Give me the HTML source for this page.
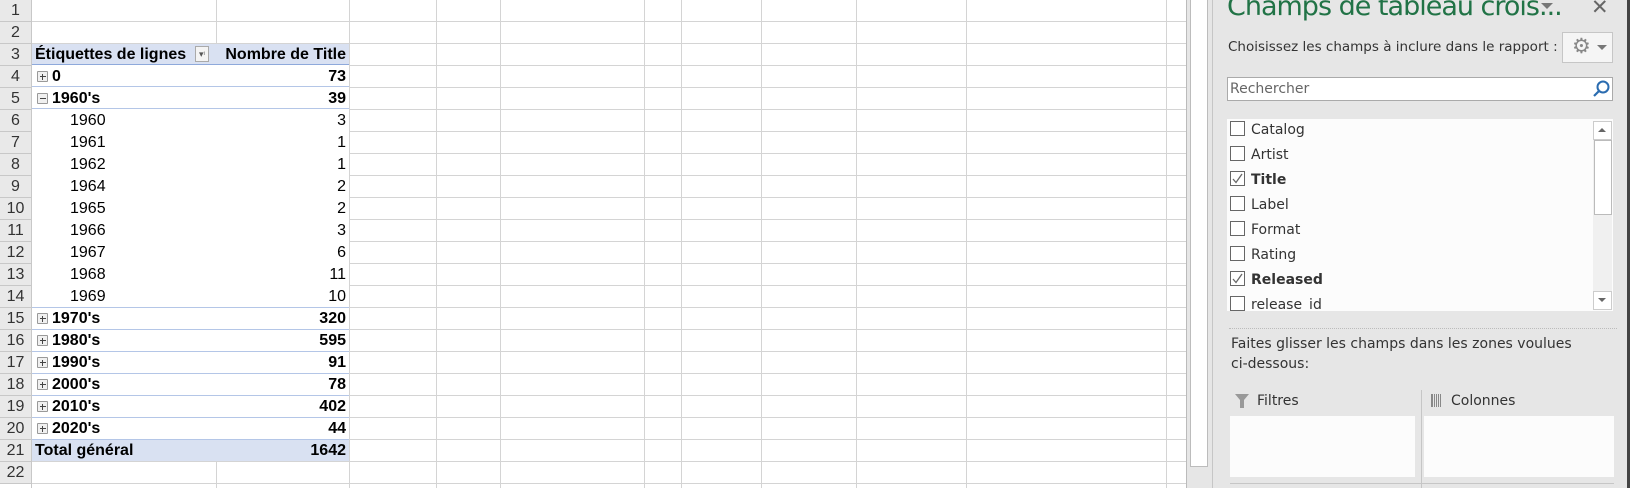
<!DOCTYPE html>
<html><head><meta charset="utf-8"><style>
*{margin:0;padding:0;box-sizing:border-box}
body{width:1630px;height:488px;overflow:hidden;background:#fff;position:relative;font-family:"Liberation Sans",sans-serif}
.a{position:absolute}
.vl{position:absolute;top:0;width:1px;height:488px;background:#d4d4d4}
.hl{position:absolute;left:0;width:1187px;height:1px;background:#d4d4d4}
.rh{position:absolute;left:0;width:31px;height:22px;background:#e9e9e9;color:#333;font-size:16px;text-align:center;line-height:22px;border-bottom:1px solid #c8c8c8}
.c{position:absolute;height:21px;line-height:22px;font-size:16px;color:#000;white-space:nowrap}
.b{font-weight:bold}
.r{text-align:right}
.pm{position:absolute;width:11px;height:11px;border:1px solid #999;background:#f0f0f0;border-radius:1px}
.pm:before{content:"";position:absolute;left:1.5px;top:4px;width:6px;height:1px;background:#444}
.pm.p:after{content:"";position:absolute;left:4px;top:1.5px;width:1px;height:6px;background:#444}
.cb{position:absolute;left:1230px;width:15px;height:15px;border:1px solid #666;background:#fff}
.it{position:absolute;left:1251px;font-size:14px;color:#333;font-family:"DejaVu Sans","Liberation Sans",sans-serif}
</style></head><body>
<div class="vl" style="left:216px"></div>
<div class="vl" style="left:349px"></div>
<div class="vl" style="left:436px"></div>
<div class="vl" style="left:500px"></div>
<div class="vl" style="left:644px"></div>
<div class="vl" style="left:681px"></div>
<div class="vl" style="left:761px"></div>
<div class="vl" style="left:856px"></div>
<div class="vl" style="left:966px"></div>
<div class="vl" style="left:1166px"></div>
<div id="hls"></div>
<script>
var h='';
for(var i=1;i<=22;i++){h+='<div class="hl" style="top:'+(22*i-1)+'px"></div>';h+='<div class="rh" style="top:'+(22*(i-1))+'px">'+i+'</div>';}
document.getElementById('hls').innerHTML=h;
</script>
<div class="a" style="left:31px;top:0;width:1px;height:488px;background:#c8c8c8"></div>
<div class="a" style="left:32px;top:65px;width:317px;height:375px;background:#fff"></div>
<div class="a" style="left:32px;top:44px;width:317px;height:21px;background:#d9e1f2"></div>
<div class="a" style="left:32px;top:64px;width:317px;height:1px;background:#8ea9db"></div>
<div class="a" style="left:32px;top:440px;width:317px;height:21px;background:#d9e1f2"></div>
<div class="a" style="left:32px;top:439px;width:317px;height:1px;background:#8ea9db"></div>
<div class="a" style="left:32px;top:108px;width:317px;height:1px;background:#b4c6e7"></div>
<div class="c b" style="left:35px;top:44px">Étiquettes de lignes</div>
<div class="a" style="left:195px;top:46px;width:14px;height:16px;border:1px solid #aaa;background:#f4f4f4;font-size:9px;color:#555;line-height:14px;text-align:center">▾ᶦ</div>
<div class="c b r" style="left:205px;top:44px;width:141px">Nombre de Title</div>
<div id="rows"></div>
<script>
var d=[['0','73',1,1],['1960\'s','39',1,0],['1960','3'],['1961','1'],['1962','1'],['1964','2'],['1965','2'],['1966','3'],['1967','6'],['1968','11'],['1969','10'],['1970\'s','320',1,1],['1980\'s','595',1,1],['1990\'s','91',1,1],['2000\'s','78',1,1],['2010\'s','402',1,1],['2020\'s','44',1,1]];
var s='';
for(var k=0;k<d.length;k++){var t=22*(k+3);var x=d[k];
 s+='<div class="a" style="left:32px;top:'+(t+21)+'px;width:317px;height:1px;background:'+(k>=10?'#b4c6e7':'#fff')+'"></div>';
 if(x.length>2){s+='<div class="pm'+(x[3]?' p':'')+'" style="left:37px;top:'+(t+5)+'px"></div><div class="c b" style="left:52px;top:'+t+'px">'+x[0]+'</div><div class="c b r" style="left:250px;width:96px;top:'+t+'px">'+x[1]+'</div>';}
 else s+='<div class="c" style="left:70px;top:'+t+'px">'+x[0]+'</div><div class="c r" style="left:250px;width:96px;top:'+t+'px">'+x[1]+'</div>';}
document.getElementById('rows').innerHTML=s;
</script>
<div class="a" style="left:32px;top:86px;width:317px;height:1px;background:#b4c6e7"></div>
<div class="c b" style="left:35px;top:440px">Total général</div>
<div class="c b r" style="left:250px;width:96px;top:440px">1642</div>
<div class="a" style="left:1186px;top:0;width:1px;height:488px;background:#bbb"></div>
<div class="a" style="left:1187px;top:0;width:25px;height:488px;background:#e6e6e6"></div>
<div class="a" style="left:1190px;top:0;width:18px;height:467px;background:#fff;border:1px solid #bcbcbc;border-top:none"></div>
<div class="a" style="left:1212px;top:0;width:1px;height:488px;background:#c6c6c6"></div>
<div class="a" style="left:1213px;top:0;width:417px;height:488px;background:#e6e6e6"></div>
<div class="a" style="left:1627px;top:0;width:3px;height:488px;background:#444"></div>
<div class="a" style="left:1227px;top:-9px;font-size:27px;color:#217346;font-family:'DejaVu Sans','Liberation Sans',sans-serif;letter-spacing:-1px;white-space:nowrap">Champs de tableau crois...</div>
<div class="a" style="left:1541px;top:3px;width:0;height:0;border-left:6px solid transparent;border-right:6px solid transparent;border-top:6px solid #777"></div>
<div class="a" style="left:1591px;top:-5px;font-size:21px;color:#666">✕</div>
<div class="a it" style="left:1228px;top:39px;font-size:13.5px;white-space:nowrap">Choisissez les champs à inclure dans le rapport :</div>
<div class="a" style="left:1562px;top:32px;width:51px;height:31px;border:1px solid #c6c6c6;background:#f5f5f5"></div>
<div class="a" style="left:1572px;top:34px;font-size:21px;color:#888">⚙</div>
<div class="a" style="left:1597px;top:45px;width:0;height:0;border-left:5px solid transparent;border-right:5px solid transparent;border-top:5px solid #777"></div>
<div class="a" style="left:1227px;top:77px;width:386px;height:24px;border:1px solid #aaa;background:#fff"></div>
<div class="a it" style="left:1230px;top:81px;color:#666">Rechercher</div>
<svg class="a" style="left:1592px;top:80px" width="18" height="18" viewBox="0 0 18 18"><circle cx="11" cy="7" r="5.5" fill="none" stroke="#2b6cb0" stroke-width="2"/><line x1="7" y1="11" x2="2" y2="16" stroke="#2b6cb0" stroke-width="2.2"/></svg>
<div class="a" style="left:1227px;top:119px;width:386px;height:192px;background:#fcfcfc"></div>
<div class="a" style="left:1593px;top:121px;width:19px;height:189px;background:#f0f0f0"></div>
<div class="a" style="left:1593px;top:121px;width:19px;height:19px;border:1px solid #ccc;background:#fff"></div>
<div class="a" style="left:1598px;top:128px;border-left:4px solid transparent;border-right:4px solid transparent;border-bottom:4px solid #666"></div>
<div class="a" style="left:1594px;top:140px;width:18px;height:75px;border:1px solid #bbb;background:#fff"></div>
<div class="a" style="left:1593px;top:291px;width:19px;height:19px;border:1px solid #ccc;background:#fff"></div>
<div class="a" style="left:1598px;top:298px;border-left:4px solid transparent;border-right:4px solid transparent;border-top:4px solid #666"></div>
<div id="items"></div>
<script>
var it=[['Catalog',0],['Artist',0],['Title',1],['Label',0],['Format',0],['Rating',0],['Released',1],['release_id',0]];
var q='';
for(var j=0;j<it.length;j++){var cy=130+25*j;
 q+='<div class="cb" style="top:'+(cy-9)+'px">'+(it[j][1]?'<svg width="13" height="13" style="position:absolute;left:0;top:0"><path d="M2 7 L5 10.5 L11 2" fill="none" stroke="#666" stroke-width="1.3"/></svg>':'')+'</div>';
 q+='<div class="it" style="top:'+(cy-8)+'px;'+(it[j][1]?'font-weight:bold;':'')+'">'+it[j][0]+'</div>';}
document.getElementById('items').innerHTML=q;
</script>
<div class="a" style="left:1227px;top:311px;width:386px;height:8px;background:#e6e6e6"></div>
<div class="a" style="left:1229px;top:328px;width:388px;height:0;border-top:1px dotted #bbb"></div>
<div class="a it" style="left:1231px;top:334px;line-height:20px">Faites glisser les champs dans les zones voulues<br>ci-dessous:</div>
<svg class="a" style="left:1235px;top:394px" width="14" height="14"><path d="M0 0 H14 L9 6 V14 H5 V6 Z" fill="#999"/></svg>
<div class="a it" style="left:1257px;top:393px">Filtres</div>
<svg class="a" style="left:1431px;top:394px" width="12" height="13"><rect x="0" y="0" width="2" height="13" fill="#888"/><rect x="3" y="0" width="1" height="13" fill="#888"/><rect x="5" y="0" width="1" height="13" fill="#888"/><rect x="7" y="0" width="1" height="13" fill="#888"/><rect x="9" y="0" width="1" height="13" fill="#888"/></svg>
<div class="a it" style="left:1451px;top:393px">Colonnes</div>
<div class="a" style="left:1421px;top:390px;width:1px;height:98px;background:#c6c6c6"></div>
<div class="a" style="left:1230px;top:416px;width:185px;height:61px;background:#fcfcfc"></div>
<div class="a" style="left:1424px;top:416px;width:190px;height:61px;background:#fcfcfc"></div>
<div class="a" style="left:1230px;top:483px;width:384px;height:1px;background:#c6c6c6"></div>
</body></html>
